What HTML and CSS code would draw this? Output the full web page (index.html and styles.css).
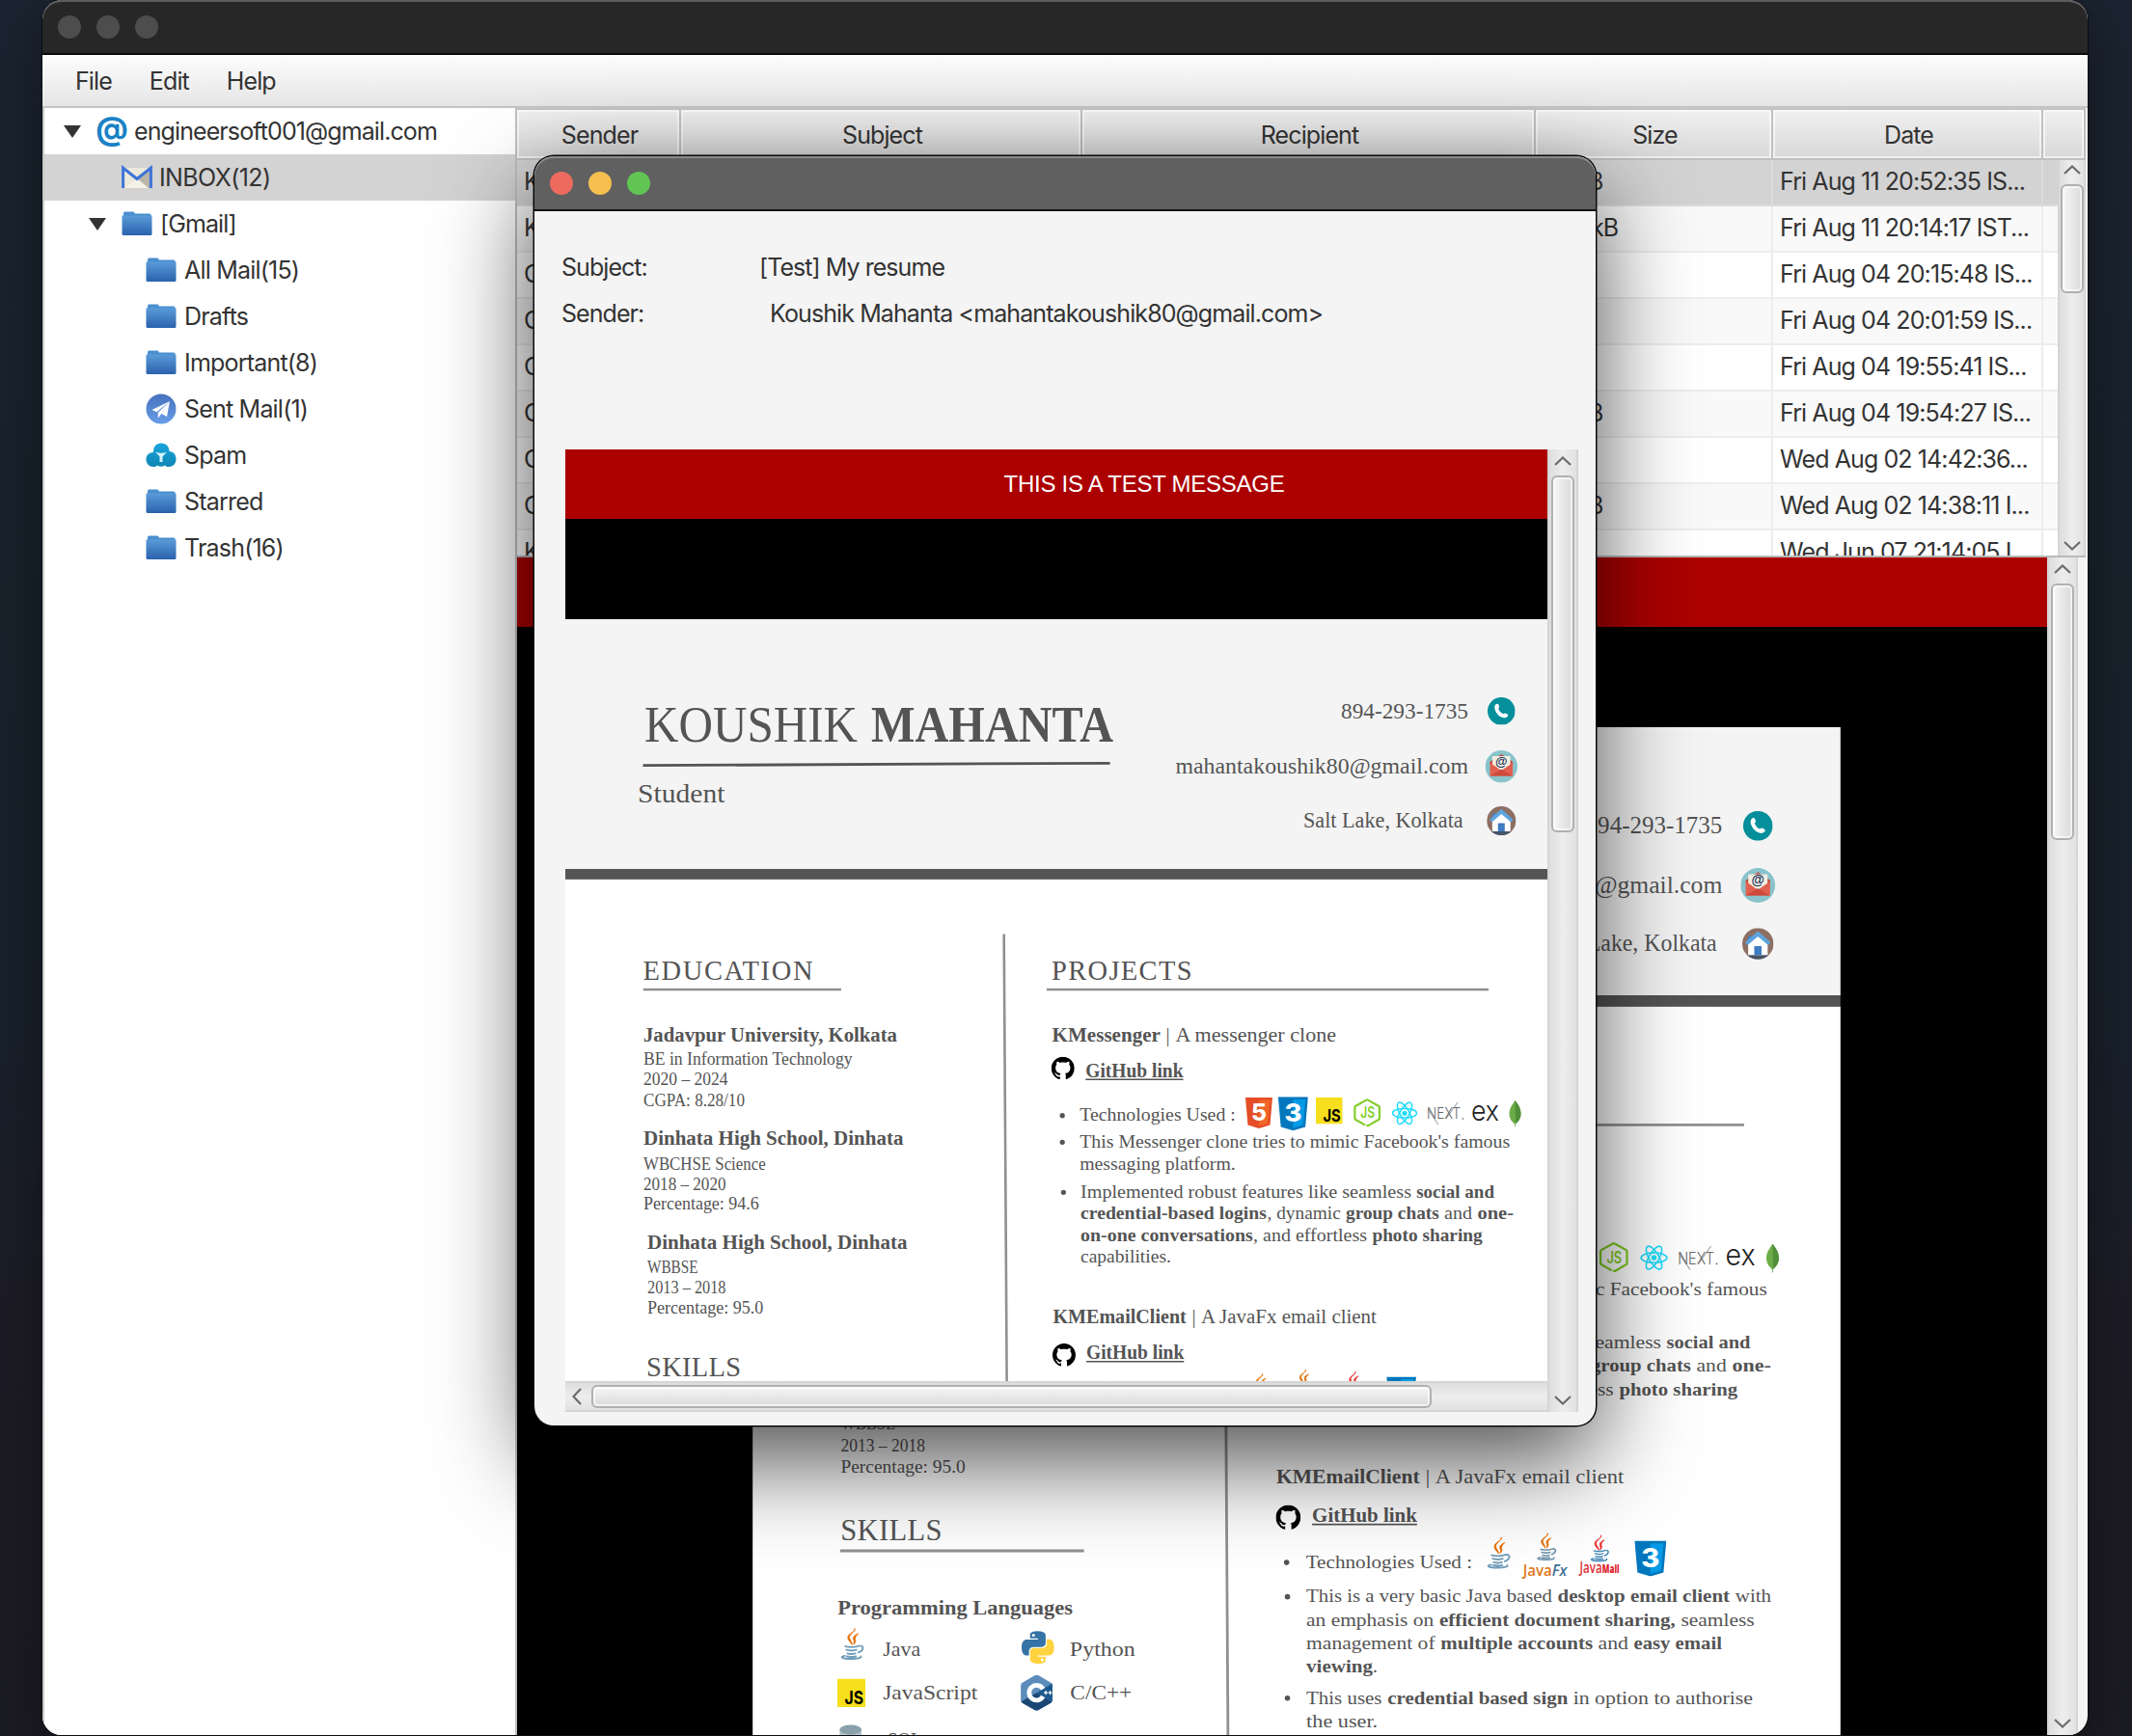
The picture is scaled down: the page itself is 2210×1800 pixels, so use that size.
FILE: index.html
```html
<!DOCTYPE html>
<html lang="en">
<head>
<meta charset="utf-8">
<title>Email client</title>
<link rel="stylesheet" href="styles.css">
</head>
<body>
<svg class="defs" width="0" height="0" aria-hidden="true">
  <defs>
    <linearGradient id="folderFill" x1="0" y1="0" x2="0" y2="1"><stop offset="0" stop-color="#5a9bd8"/><stop offset="1" stop-color="#2a62ad"/></linearGradient>
    <linearGradient id="sentFill" x1="0" y1="0" x2="0" y2="1"><stop offset="0" stop-color="#4571bd"/><stop offset="1" stop-color="#6a9ee8"/></linearGradient>
    <linearGradient id="spamFill" x1="0" y1="0" x2="0" y2="1"><stop offset="0" stop-color="#18a5dc"/><stop offset="1" stop-color="#0f86b5"/></linearGradient>
    <symbol id="folder" viewBox="0 0 32 32">
      <path d="M2 7V5q0-1.500 1.500-1.500H12q1.500 0 1.800 2H29q1.500 0 1.500 1.500v3H2z" fill="#4a8fd0"/>
      <path d="M.500 7.500h31V26.500q0 1.500-1.500 1.500H2Q.500 28 .500 26.500z" fill="url(#folderFill)"/>
    </symbol>
    <symbol id="github" viewBox="0 0 16 16"><path d="M8 0C3.580 0 0 3.580 0 8c0 3.540 2.290 6.530 5.470 7.590.4.070.550-.170.550-.380 0-.190-.010-.820-.010-1.490-2.010.370-2.530-.490-2.690-.940-.090-.230-.480-.940-.820-1.130-.280-.150-.680-.520-.010-.530.630-.010 1.080.580 1.230.820.720 1.210 1.870.870 2.330.660.070-.520.280-.870.510-1.070-1.780-.200-3.640-.890-3.640-3.950 0-.870.310-1.590.820-2.150-.080-.200-.360-1.020.080-2.120 0 0 .670-.210 2.200.820.640-.180 1.320-.270 2-.270.680 0 1.360.090 2 .270 1.530-1.040 2.200-.820 2.200-.820.440 1.100.160 1.920.080 2.120.510.560.820 1.270.820 2.150 0 3.070-1.870 3.750-3.650 3.950.290.250.540.730.540 1.480 0 1.070-.010 1.930-.010 2.200 0 .210.150.460.550.380A8.013 8.013 0 0016 8c0-4.420-3.580-8-8-8z"/></symbol>
    <symbol id="phone" viewBox="0 0 32 32">
      <circle cx="16" cy="16" r="16" fill="#048f9b"/>
      <path d="M9.500 8.200c1.600-1.500 3-.700 3.700 1.200.600 1.800.500 2.400-.700 3.800.8 2.600 3 5 5.600 6.200 1.500-1.300 2.200-1.300 3.900-.500 2.200 1 2.500 2.200 1 3.600-3 2.900-8.300.800-11.300-2.700C8.500 16 6.800 11 9.500 8.200z" fill="#fff"/>
    </symbol>
    <symbol id="mail" viewBox="0 0 34 34">
      <circle cx="17" cy="17" r="17" fill="#89c3cb"/>
      <path d="M5 12L17 4l12 8v3H5z" fill="#c34a3d"/>
      <path d="M7.500 6h19v14h-19z" fill="#f3eee0"/>
      <path d="M5 13l12 8.500L29 13v14H5z" fill="#e2604f"/>
      <path d="M5 27l12-7 12 7z" fill="#cf4a3b"/>
      <text x="17" y="16.500" class="at-small">@</text>
    </symbol>
    <symbol id="home" viewBox="0 0 32 32">
      <circle cx="16" cy="16" r="16" fill="#8d6e63"/>
      <path d="M5 27.500h22A16 16 0 0 1 5 27.500z" fill="#455469"/>
      <path d="M6 8h4v8H6z" fill="#4a7fc1"/>
      <path d="M16 6L26 15.500V27.500H6V15.500z" fill="#fff"/>
      <path d="M16 3L29 14.500l-2.500 3L16 8.500 5.500 17.500 3 14.500z" fill="#5da4e0"/>
      <path d="M12.300 18.500h7.400v9h-7.400z" fill="#3e7cc4"/>
    </symbol>
    <symbol id="html5" viewBox="0 0 28 32">
      <path d="M0 0h28l-2.500 28.600L14 32 2.500 28.600z" fill="#e44d26"/>
      <path d="M14 2.500h11.500l-2.200 24.500L14 29.600z" fill="#f16529"/>
      <text x="6" y="23.500" textLength="16" lengthAdjust="spacingAndGlyphs" class="shield-digit">5</text>
    </symbol>
    <symbol id="css3" viewBox="0 0 31 35">
      <path d="M0 0h31l-2.800 31.200L15.500 35 2.800 31.200z" fill="#0277bd"/>
      <path d="M15.500 2.700h12.700l-2.400 26.600-10.300 3z" fill="#039be5"/>
      <text x="6.500" y="26" textLength="18" lengthAdjust="spacingAndGlyphs" class="shield-digit shield-digit-lg">3</text>
    </symbol>
    <symbol id="jslogo" viewBox="0 0 28 28"><path d="M0 0h28v28H0z" fill="#f7df1e"/><text x="7.500" y="25.500" textLength="18.500" lengthAdjust="spacingAndGlyphs" class="js-text">JS</text></symbol>
    <symbol id="node" viewBox="0 0 29 31">
      <path d="M12.500 28.300L2.500 22.600Q1.500 22 1.500 21V9.700q0-1 1-1.600L13.500 1.900q1-.6 2 0l11 6.200q1 .6 1 1.600V21q0 1-1 1.600l-10 5.800q-1.500 1-2.500-.4" fill="none" stroke="#83cd29" stroke-width="2.200"/>
      <text x="7.500" y="21" textLength="15" lengthAdjust="spacingAndGlyphs" class="node-text">JS</text>
    </symbol>
    <symbol id="react" viewBox="0 0 28 26">
      <g fill="none" stroke="#22dcfb" stroke-width="1.600"><ellipse cx="14" cy="13" rx="13" ry="5"/><ellipse cx="14" cy="13" rx="13" ry="5" transform="rotate(60 14 13)"/><ellipse cx="14" cy="13" rx="13" ry="5" transform="rotate(120 14 13)"/></g>
      <circle cx="14" cy="13" r="2.700" fill="#22dcfb"/>
    </symbol>
    <symbol id="mongo" viewBox="0 0 13 28">
      <path d="M6.500 0C9 4 12.500 7.500 12.500 14c0 5-2.500 8-5.500 10.500L6.800 28h-.6L6 24.500C3 22 .500 19 .500 14 .500 7.500 4.500 4 6.500 0z" fill="#6cac48"/>
      <path d="M6.500 0C9 4 12.500 7.500 12.500 14c0 5-2.500 8-5.500 10.500z" fill="#4f8f3a"/>
    </symbol>
    <symbol id="steam" viewBox="0 0 12 17"><path d="M7.500 .500C9 3.500 1 6 2.500 10c.6 2 2.500 3.500 2.500 6.200C3.500 13.500.600 12 .900 9 1.300 5 8 4.500 7.500 .500zM11 5.500C7.500 7 6 8.800 6.200 10.500c.1 1.500 1.500 2 .2 5.500 3-3 1.500-4.300 1.400-5.500 0-1.500 1.100-3 3.200-5z" fill="currentColor" stroke="currentColor" stroke-width=".800"/></symbol>
    <symbol id="cup" viewBox="0 0 23 16">
      <g fill="none" stroke-width="1.800" stroke-linecap="round"><path d="M4.500 1.500q6 1.500 12 0M5.500 5q5 1.500 10 0M6.500 8.500q4 1.300 8 0M18 1c6-1 4.500 5-.5 6.500M4 11c-6 1-2.500 3 6 3 6 0 11-.8 10-2.500M6 11.500q4 1 9 0"/></g>
    </symbol>
    <symbol id="python" viewBox="0 0 32 32">
      <path d="M15.800.300C8 .300 8.500 3.700 8.500 3.700v3.500H16v1.100H5.400S.300 7.700.300 15.900s4.500 7.900 4.500 7.900h2.600V20s-.1-4.500 4.400-4.500h7.500s4.200.1 4.200-4.100V4.500S24.200.300 15.800.300z" fill="#3572a5"/>
      <circle cx="11.700" cy="4.100" r="1.400" fill="#fff"/>
      <path d="M16.200 31.700c7.800 0 7.300-3.400 7.300-3.400v-3.500H16v-1.100h10.600s5.100.6 5.100-7.600-4.500-7.900-4.500-7.900h-2.600V12s.1 4.500-4.400 4.500h-7.500s-4.200-.1-4.200 4.100v6.900s-.7 4.200 7.700 4.200z" fill="#ffd340"/>
      <circle cx="20.300" cy="27.900" r="1.400" fill="#fff"/>
    </symbol>
    <symbol id="cpp" viewBox="0 0 31 35">
      <path d="M15.500 0q1 0 2 .6l12 7q1.500.9 1.500 2.400v15q0 1.500-1.500 2.400l-12 7q-2 1.200-4 0l-12-7Q0 26.500 0 25V10Q0 8.500 1.500 7.600l12-7q1-.6 2-.6z" fill="#5c8dbc"/>
      <path d="M15.500 17.500L30.300 26q-.3 1-1 1.400l-12 7q-1.800 1.200-3.800 0l-12-7Q1 27 .600 26z" fill="#1a4674"/>
      <path d="M15.500 17.500L30.500 8.500q.5.500.5 1.500v15q0 .700-.4 1.200z" fill="#1b598e"/>
      <path d="M21.800 13.800A7.300 7.300 0 1 0 21.800 21.200" fill="none" stroke="#fff" stroke-width="4.500"/>
      <path d="M22.500 17.500h4M24.500 15.500v4M27 17.500h3.500M28.700 15.500v4" stroke="#fff" stroke-width="1.200"/>
    </symbol>
  </defs>
</svg>

<main class="desktop">
  <section class="window main-window">
    <header class="titlebar"><i class="dot"></i><i class="dot"></i><i class="dot"></i></header>
    <nav class="menubar"><span>File</span><span>Edit</span><span>Help</span></nav>
    <div class="workspace">
      <ul class="tree">
        <li class="lvl0"><i class="twisty"></i><svg class="ico ico-at" viewBox="0 0 32 40"><text x="16" y="29" class="at-big">@</text></svg><span>engineersoft001@gmail.com</span></li>
        <li class="lvl1 leaf selected"><svg class="ico" viewBox="0 0 32 32"><path d="M1.500 6h29v21h-29z" fill="#ece9dc"/><path d="M16 17L30 7v20h-5z" fill="#b9b6a8"/><path d="M4 27l12-10 12 10z" fill="#f4f2e8"/><path d="M1.600 27V6L16 17.500 30.400 6v21" fill="none" stroke="#3f74d8" stroke-width="3"/></svg><span>INBOX(12)</span></li>
        <li class="lvl1"><i class="twisty"></i><svg class="ico"><use href="#folder"/></svg><span>[Gmail]</span></li>
        <li class="lvl2"><svg class="ico"><use href="#folder"/></svg><span>All Mail(15)</span></li>
        <li class="lvl2"><svg class="ico"><use href="#folder"/></svg><span>Drafts</span></li>
        <li class="lvl2"><svg class="ico"><use href="#folder"/></svg><span>Important(8)</span></li>
        <li class="lvl2"><svg class="ico" viewBox="0 0 32 32"><circle cx="16" cy="16" r="15.500" fill="url(#sentFill)"/><path d="M25 8L6.500 17l5 2.200zM25 8L12.800 20v5.500l3-3.800zM25 8l-8.500 13 5.500 3z" fill="#fff"/></svg><span>Sent Mail(1)</span></li>
        <li class="lvl2"><svg class="ico" viewBox="0 0 32 32"><path d="M8 13C8 7 11 3.500 16 3.500S24.500 7 24.500 12c4.500.3 7 3.500 7 8 0 5-3.500 8-7.500 8-2 0-3-.5-4-1.500q-4 2.500-8 0C11 27.500 10 28 8 28c-4.500 0-7.500-3.500-7.500-8 0-4 3-7 7.500-7z" fill="url(#spamFill)"/><path d="M10 12.500q6 2.500 12 0L17.500 17.500V23h-3v-5.500z" fill="#d5f1fa"/></svg><span>Spam</span></li>
        <li class="lvl2"><svg class="ico"><use href="#folder"/></svg><span>Starred</span></li>
        <li class="lvl2"><svg class="ico"><use href="#folder"/></svg><span>Trash(16)</span></li>
      </ul>
      <div class="content">
        <div class="table">
          <div class="row head"><span>Sender</span><span>Subject</span><span>Recipient</span><span>Size</span><span>Date</span><span></span></div>
          <div class="table-body">
            <div class="rows">
              <div class="row selected"><span>K</span><span></span><span></span><span class="size-a">B</span><span>Fri Aug 11 20:52:35 IS...</span><span></span></div>
              <div class="row alt"><span>K</span><span></span><span></span><span class="size-b">kB</span><span>Fri Aug 11 20:14:17 IST...</span><span></span></div>
              <div class="row"><span>G</span><span></span><span></span><span></span><span>Fri Aug 04 20:15:48 IS...</span><span></span></div>
              <div class="row alt"><span>G</span><span></span><span></span><span></span><span>Fri Aug 04 20:01:59 IS...</span><span></span></div>
              <div class="row"><span>G</span><span></span><span></span><span></span><span>Fri Aug 04 19:55:41 IS...</span><span></span></div>
              <div class="row alt"><span>G</span><span></span><span></span><span class="size-a">B</span><span>Fri Aug 04 19:54:27 IS...</span><span></span></div>
              <div class="row"><span>G</span><span></span><span></span><span></span><span>Wed Aug 02 14:42:36...</span><span></span></div>
              <div class="row alt"><span>G</span><span></span><span></span><span class="size-a">B</span><span>Wed Aug 02 14:38:11 I...</span><span></span></div>
              <div class="row"><span>K</span><span></span><span></span><span></span><span>Wed Jun 07 21:14:05 I...</span><span></span></div>
            </div>
            <div class="vbar table-bar"><svg class="arrow" viewBox="0 0 18 10"><path d="M1 9l8-7.500L17 9"/></svg><i class="thumb"></i><svg class="arrow" viewBox="0 0 18 10"><path d="M1 1l8 7.500L17 1"/></svg></div>
          </div>
        </div>
        <div class="preview">
          <div class="message">
            <div class="banner"></div>
            <svg class="resume resume-back" viewBox="0 0 1050 974" fill="#545454">
              <path d="M0 0h1050v259H0z" fill="#f4f4f4"/><path d="M0 259h1050v10.700H0z"/><path d="M0 269.700h1050V974H0z" fill="#fff"/>
              <g class="t22">
                <text x="804" y="102.500" textLength="132" lengthAdjust="spacingAndGlyphs">894-293-1735</text>
                <text x="632.400" y="160" textLength="303.600" lengthAdjust="spacingAndGlyphs">mahantakoushik80@gmail.com</text>
                <text x="765" y="215.700" textLength="165.700" lengthAdjust="spacingAndGlyphs">Salt Lake, Kolkata</text>
              </g>
              <use href="#phone" x="956" y="81" width="28.600" height="28.600"/><use href="#mail" x="953.600" y="136" width="33.400" height="33.400"/><use href="#home" x="955.200" y="194" width="30.200" height="30.200"/>
              <path d="M499 384H957M84.400 795.200H319.800M454.700 326.600L458.800 974" class="rule"/>
              <use href="#node" x="816.900" y="496.500" width="28.500" height="31"/><use href="#react" x="856.500" y="499.500" width="27" height="25.500"/>
              <text x="893" y="518.300" textLength="35" lengthAdjust="spacingAndGlyphs" class="next">NEXT</text><path d="M894 508l11 16M913 518l12-17" stroke="#777" stroke-width=".8"/><circle cx="930.500" cy="518" r=".8"/>
              <text x="939" y="520" textLength="29" lengthAdjust="spacingAndGlyphs" class="express">ex</text>
              <use href="#mongo" x="978" y="498.700" width="13" height="28"/>
              <g class="t17">
                <text x="533.200" y="548" textLength="446" lengthAdjust="spacingAndGlyphs">This Messenger clone tries to mimic Facebook's famous</text>
                <text x="534" y="599.700" textLength="343" lengthAdjust="spacingAndGlyphs">Implemented robust features like seamless</text><text x="882.200" y="599.700" textLength="80.800" lengthAdjust="spacingAndGlyphs" class="b">social and</text>
                <text x="809" y="622.300" textLength="96.800" lengthAdjust="spacingAndGlyphs" class="b">group chats</text><text x="911" y="622.300" textLength="29" lengthAdjust="spacingAndGlyphs">and</text><text x="945.400" y="622.300" textLength="37.600" lengthAdjust="spacingAndGlyphs" class="b">one-</text>
                <text x="713.600" y="645" textLength="117.400" lengthAdjust="spacingAndGlyphs">, and effortless</text><text x="836.400" y="645" textLength="114.300" lengthAdjust="spacingAndGlyphs" class="b">photo sharing</text>
                <text x="85" y="678" textLength="52.600" lengthAdjust="spacingAndGlyphs">WBBSE</text>
                <text x="85" y="699" textLength="81.500" lengthAdjust="spacingAndGlyphs">2013 – 2018</text>
                <text x="85" y="720" textLength="120.400" lengthAdjust="spacingAndGlyphs">Percentage: 95.0</text>
                <text x="534" y="811.700" textLength="160.600" lengthAdjust="spacingAndGlyphs">Technologies Used :</text>
                <text x="534.400" y="845" textLength="237.300" lengthAdjust="spacingAndGlyphs">This is a very basic Java based</text><text x="777" y="845" textLength="166.200" lengthAdjust="spacingAndGlyphs" class="b">desktop email client</text><text x="948.500" y="845" textLength="34.700" lengthAdjust="spacingAndGlyphs">with</text>
                <text x="534.400" y="867.500" textLength="123.100" lengthAdjust="spacingAndGlyphs">an emphasis on</text><text x="662.700" y="867.500" textLength="228" lengthAdjust="spacingAndGlyphs" class="b">efficient document sharing,</text><text x="896" y="867.500" textLength="71" lengthAdjust="spacingAndGlyphs">seamless</text>
                <text x="534.400" y="890" textLength="124.300" lengthAdjust="spacingAndGlyphs">management of</text><text x="664" y="890" textLength="147" lengthAdjust="spacingAndGlyphs" class="b">multiple accounts</text><text x="816" y="890" textLength="29.200" lengthAdjust="spacingAndGlyphs">and</text><text x="850.400" y="890" textLength="85.200" lengthAdjust="spacingAndGlyphs" class="b">easy email</text>
                <text x="534.400" y="912.700" textLength="64.200" lengthAdjust="spacingAndGlyphs" class="b">viewing</text><text x="598.600" y="912.700">.</text>
                <text x="534.400" y="943" textLength="73" lengthAdjust="spacingAndGlyphs">This uses</text><text x="612.700" y="943" textLength="174.300" lengthAdjust="spacingAndGlyphs" class="b">credential based sign</text><text x="791.900" y="943" textLength="173.500" lengthAdjust="spacingAndGlyphs">in option to authorise</text>
                <text x="534.400" y="965.600" textLength="69" lengthAdjust="spacingAndGlyphs">the user.</text>
              </g>
              <circle cx="515.400" cy="806.500" r="2.600"/><circle cx="516.200" cy="839.600" r="2.600"/><circle cx="516.200" cy="937.400" r="2.600"/>
              <g class="t19">
                <text x="505.400" y="730" textLength="138.400" lengthAdjust="spacingAndGlyphs" class="b">KMEmailClient</text><text x="649.500" y="730">|</text><text x="658.900" y="730" textLength="182" lengthAdjust="spacingAndGlyphs">A JavaFx email client</text>
                <text x="540" y="767" textLength="101.300" lengthAdjust="spacingAndGlyphs" class="b">GitHub link</text>
                <text x="82" y="856.300" textLength="227" lengthAdjust="spacingAndGlyphs" class="b">Programming Languages</text>
                <text x="125.700" y="896.300" textLength="36.300" lengthAdjust="spacingAndGlyphs">Java</text><text x="306" y="896.300" textLength="63.300" lengthAdjust="spacingAndGlyphs">Python</text>
                <text x="125.700" y="938.500" textLength="91.300" lengthAdjust="spacingAndGlyphs">JavaScript</text><text x="306.500" y="938.500" textLength="59.500" lengthAdjust="spacingAndGlyphs">C/C++</text>
                <text x="130.300" y="984" textLength="33" lengthAdjust="spacingAndGlyphs">SQL</text>
              </g>
              <path d="M540 769.700h101.300" stroke="#545454" stroke-width="1.500"/>
              <use href="#github" x="505" y="751" width="24" height="24" fill="#000"/>
              <text x="84.800" y="784.600" textLength="98" lengthAdjust="spacing" class="section">SKILLS</text>
              <use href="#steam" x="715" y="781.500" width="12" height="17.500" color="#e76f00"/><use href="#cup" x="708.700" y="798" width="23" height="15.500" stroke="#6f9cba"/>
              <use href="#steam" x="760.500" y="777.500" width="11" height="16" color="#e76f00"/><use href="#cup" x="756.500" y="792.500" width="20" height="13" stroke="#6f94ad"/>
              <text x="743.500" y="819" textLength="28" lengthAdjust="spacingAndGlyphs" class="brand" fill="#e07a1c">Java</text><text x="771.500" y="819" textLength="14.500" lengthAdjust="spacingAndGlyphs" class="brand it" fill="#3f7196">Fx</text>
              <use href="#steam" x="812" y="779.500" width="11" height="16" color="#ea2d2e"/><use href="#cup" x="808" y="794" width="19.500" height="12.500" stroke="#4a8cba"/>
              <text x="798.400" y="816.500" textLength="21.500" lengthAdjust="spacingAndGlyphs" class="brand" fill="#e0303a">Java</text><text x="820" y="816.500" textLength="16.500" lengthAdjust="spacingAndGlyphs" class="brand sm" fill="#e0202a">Mail</text>
              <use href="#css3" x="851.200" y="785.400" width="30.800" height="34.600"/>
              <use href="#steam" x="91" y="869.400" width="12" height="17.500" color="#e76f00"/><use href="#cup" x="84.800" y="886" width="23" height="15.500" stroke="#6f9cba"/>
              <use href="#python" x="259.300" y="872.500" width="32" height="32"/><use href="#jslogo" x="81.500" y="918.500" width="27.500" height="27.500"/><use href="#cpp" x="258.600" y="915" width="31" height="34.500"/>
              <path d="M84 968v8h21v-8z" fill="#b5c6d0"/><ellipse cx="94.500" cy="968" rx="10.600" ry="4.600" fill="#8aa0ab"/>
            </svg>
          </div>
          <div class="vbar preview-bar"><svg class="arrow" viewBox="0 0 18 10"><path d="M1 9l8-7.500L17 9"/></svg><i class="thumb"></i><svg class="arrow" viewBox="0 0 18 10"><path d="M1 1l8 7.500L17 1"/></svg></div>
        </div>
      </div>
    </div>
  </section>

  <section class="window popup">
    <header class="titlebar"><i class="dot red"></i><i class="dot yellow"></i><i class="dot green"></i></header>
    <dl class="fields">
      <dt>Subject:</dt><dd>[Test] My resume</dd>
      <dt>Sender:</dt><dd class="from">Koushik Mahanta &lt;mahantakoushik80@gmail.com&gt;</dd>
    </dl>
    <div class="viewer">
      <div class="page">
        <div class="message">
          <div class="banner"><span>THIS IS A TEST MESSAGE</span></div>
          <svg class="resume resume-front" viewBox="0 0 1050 974" fill="#545454">
            <path d="M0 0h1050v259H0z" fill="#f4f4f4"/><path d="M0 259h1050v10.700H0z"/><path d="M0 269.700h1050V974H0z" fill="#fff"/>
            <text x="82" y="127" textLength="221" lengthAdjust="spacingAndGlyphs" class="name">KOUSHIK</text><text x="317" y="127" textLength="251" lengthAdjust="spacingAndGlyphs" class="name b">MAHANTA</text>
            <path d="M80.500 151.700L564.600 149.300" stroke="#545454" stroke-width="2.800"/>
            <text x="75" y="190" textLength="90.500" lengthAdjust="spacingAndGlyphs" class="role">Student</text>
            <g class="t22">
              <text x="804" y="102.500" textLength="132" lengthAdjust="spacingAndGlyphs">894-293-1735</text>
              <text x="632.400" y="160" textLength="303.600" lengthAdjust="spacingAndGlyphs">mahantakoushik80@gmail.com</text>
              <text x="765" y="215.700" textLength="165.700" lengthAdjust="spacingAndGlyphs">Salt Lake, Kolkata</text>
            </g>
            <use href="#phone" x="956" y="81" width="28.600" height="28.600"/><use href="#mail" x="953.600" y="136" width="33.400" height="33.400"/><use href="#home" x="955.200" y="194" width="30.200" height="30.200"/>
            <text x="80.500" y="374" textLength="176" lengthAdjust="spacing" class="section">EDUCATION</text><text x="504" y="374" textLength="145.500" lengthAdjust="spacing" class="section">PROJECTS</text><text x="84" y="784.800" textLength="98" lengthAdjust="spacing" class="section">SKILLS</text>
            <path d="M80.700 384H286M499 384H957M454.700 326.600L458.800 974" class="rule"/>
            <g class="t19">
              <text x="81" y="437.600" textLength="263" lengthAdjust="spacingAndGlyphs" class="b">Jadavpur University, Kolkata</text>
              <text x="81" y="545" textLength="269.400" lengthAdjust="spacingAndGlyphs" class="b">Dinhata High School, Dinhata</text>
              <text x="85" y="653" textLength="269.400" lengthAdjust="spacingAndGlyphs" class="b">Dinhata High School, Dinhata</text>
              <text x="504.600" y="437.700" textLength="112.300" lengthAdjust="spacingAndGlyphs" class="b">KMessenger</text><text x="622.500" y="437.700">|</text><text x="632.400" y="437.700" textLength="166.600" lengthAdjust="spacingAndGlyphs">A messenger clone</text>
              <text x="539.300" y="474.700" textLength="101.200" lengthAdjust="spacingAndGlyphs" class="b">GitHub link</text>
              <text x="505.400" y="730" textLength="138.400" lengthAdjust="spacingAndGlyphs" class="b">KMEmailClient</text><text x="649.500" y="730">|</text><text x="658.900" y="730" textLength="182" lengthAdjust="spacingAndGlyphs">A JavaFx email client</text>
              <text x="540" y="767" textLength="101.300" lengthAdjust="spacingAndGlyphs" class="b">GitHub link</text>
            </g>
            <path d="M539.300 477.300h101.200M540 769.700h101.300" stroke="#545454" stroke-width="1.500"/>
            <use href="#github" x="503.800" y="453.700" width="24" height="24" fill="#000"/><use href="#github" x="505" y="751" width="24" height="24" fill="#000"/>
            <g class="t17">
              <text x="81" y="462.300" textLength="216.600" lengthAdjust="spacingAndGlyphs">BE in Information Technology</text>
              <text x="81" y="483" textLength="87.600" lengthAdjust="spacingAndGlyphs">2020 – 2024</text>
              <text x="81" y="504.800" textLength="105" lengthAdjust="spacingAndGlyphs">CGPA: 8.28/10</text>
              <text x="81" y="570.900" textLength="126.600" lengthAdjust="spacingAndGlyphs">WBCHSE Science</text>
              <text x="81" y="591.600" textLength="85.500" lengthAdjust="spacingAndGlyphs">2018 – 2020</text>
              <text x="81" y="612.300" textLength="119.800" lengthAdjust="spacingAndGlyphs">Percentage: 94.6</text>
              <text x="85" y="678" textLength="52.600" lengthAdjust="spacingAndGlyphs">WBBSE</text>
              <text x="85" y="699" textLength="81.500" lengthAdjust="spacingAndGlyphs">2013 – 2018</text>
              <text x="85" y="720" textLength="120.400" lengthAdjust="spacingAndGlyphs">Percentage: 95.0</text>
              <text x="533.200" y="520.300" textLength="161.600" lengthAdjust="spacingAndGlyphs">Technologies Used :</text>
              <text x="533.200" y="548" textLength="446" lengthAdjust="spacingAndGlyphs">This Messenger clone tries to mimic Facebook's famous</text>
              <text x="533.200" y="570.700" textLength="161.600" lengthAdjust="spacingAndGlyphs">messaging platform.</text>
              <text x="534" y="599.700" textLength="343" lengthAdjust="spacingAndGlyphs">Implemented robust features like seamless</text><text x="882.200" y="599.700" textLength="80.800" lengthAdjust="spacingAndGlyphs" class="b">social and</text>
              <text x="534" y="622.300" textLength="193" lengthAdjust="spacingAndGlyphs" class="b">credential-based logins</text><text x="727.500" y="622.300" textLength="76.300" lengthAdjust="spacingAndGlyphs">, dynamic</text><text x="809" y="622.300" textLength="96.800" lengthAdjust="spacingAndGlyphs" class="b">group chats</text><text x="911" y="622.300" textLength="29" lengthAdjust="spacingAndGlyphs">and</text><text x="945.400" y="622.300" textLength="37.600" lengthAdjust="spacingAndGlyphs" class="b">one-</text>
              <text x="534" y="645" textLength="178.800" lengthAdjust="spacingAndGlyphs" class="b">on-one conversations</text><text x="713" y="645" textLength="118" lengthAdjust="spacingAndGlyphs">, and effortless</text><text x="836.400" y="645" textLength="114.300" lengthAdjust="spacingAndGlyphs" class="b">photo sharing</text>
              <text x="534" y="667.300" textLength="93.900" lengthAdjust="spacingAndGlyphs">capabilities.</text>
            </g>
            <circle cx="515.200" cy="514.700" r="2.600"/><circle cx="515.200" cy="542.300" r="2.600"/><circle cx="516.400" cy="594.300" r="2.600"/>
            <use href="#html5" x="705" y="496" width="28" height="32"/><use href="#css3" x="738.900" y="495.300" width="31" height="35"/><use href="#jslogo" x="778" y="495.700" width="27.700" height="27.700"/>
            <use href="#node" x="816.900" y="496.500" width="28.500" height="31"/><use href="#react" x="856.500" y="499.500" width="27" height="25.500"/>
            <text x="893" y="518.300" textLength="35" lengthAdjust="spacingAndGlyphs" class="next">NEXT</text><path d="M894 508l11 16M913 518l12-17" stroke="#777" stroke-width=".8"/><circle cx="930.500" cy="518" r=".8"/>
            <text x="939" y="520" textLength="29" lengthAdjust="spacingAndGlyphs" class="express">ex</text>
            <use href="#mongo" x="978" y="498.700" width="13" height="28"/>
            <use href="#steam" x="715" y="781.500" width="12" height="17.500" color="#e76f00"/><use href="#steam" x="760.500" y="777.500" width="11" height="16" color="#e76f00"/><use href="#steam" x="812" y="779.500" width="11" height="16" color="#ea2d2e"/><use href="#css3" x="851.200" y="785.400" width="30.800" height="34.600"/>
          </svg>
        </div>
        <div class="hbar"><svg class="arrow" viewBox="0 0 10 18"><path d="M9 1L1.500 9 9 17"/></svg><i class="thumb"></i></div>
      </div>
      <div class="vbar popup-bar"><svg class="arrow" viewBox="0 0 18 10"><path d="M1 9l8-7.500L17 9"/></svg><i class="thumb"></i><svg class="arrow" viewBox="0 0 18 10"><path d="M1 1l8 7.500L17 1"/></svg></div>
    </div>
  </section>
</main>
</body>
</html>
```
FILE: styles.css
```css
* { box-sizing: border-box; }
body { margin: 0; font-family: Inter, "Liberation Sans", sans-serif; font-size: 25px; letter-spacing: -0.9px; color: #333; }
.defs { position: absolute; }
ul, dl, dd { margin: 0; padding: 0; list-style: none; }

.desktop { position: relative; width: 2210px; height: 1800px; padding-left: 44px; overflow: hidden; background: linear-gradient(#1b2330, #17222b 35%, #18202b 60%, #1d1c26 75%, #1b1b22); }
.window { display: flex; flex-direction: column; overflow: hidden; }
.main-window { width: 2120px; height: 1799px; border-radius: 20px; background: #f4f4f4; box-shadow: 0 0 0 1px #0b0d10, 0 20px 50px rgba(0,0,0,.4); }

.titlebar { display: flex; align-items: center; gap: 16px; flex: none; }
.main-window .titlebar { height: 57px; padding: 0 16px; background: #272727; border-bottom: 2px solid #0a0a0a; box-shadow: inset 0 2px 0 #5c5c5c; border-radius: 20px 20px 0 0; }
.dot { width: 24px; height: 24px; border-radius: 50%; background: #4d4d4d; }
.red { background: #ed6a5e; }
.yellow { background: #f5bf4f; }
.green { background: #61c554; }

.menubar { display: flex; align-items: center; gap: 39px; flex: none; height: 55px; padding: 0 34px; background: linear-gradient(#fdfdfd, #e5e5e5); border-bottom: 2px solid #c4c4c4; }
.workspace { display: flex; flex: 1; min-height: 0; }

.tree { width: 492px; background: #fff; border-left: 2px solid #c8c8c8; border-right: 2px solid #c0c0c0; }
.tree li { display: flex; align-items: center; height: 48px; white-space: nowrap; }
.tree .selected { background: #d3d3d3; }
.lvl0 { padding-left: 20px; }
.lvl1 { padding-left: 46px; }
.lvl1.leaf { padding-left: 80px; }
.lvl2 { padding-left: 105px; letter-spacing: -0.8px; }
.ico { width: 32px; height: 32px; margin-right: 8px; flex: none; }
.ico-at { height: 40px; margin-right: 7px; }
.leaf .ico { margin-right: 7px; }
.leaf span { letter-spacing: -0.6px; }
.twisty { margin-right: 16px; border: 9px solid transparent; border-top: 13px solid #333; border-bottom: 0; }
.at-big { font: bold 33px Inter, sans-serif; fill: #1a82c6; text-anchor: middle; letter-spacing: 0; }

.content { display: flex; flex-direction: column; flex: 1; min-width: 0; }
.table { display: flex; flex-direction: column; height: 466px; margin-right: 2px; border-top: 2px solid #c4c4c4; border-bottom: 2px solid #b9b9b9; }
.row { display: grid; grid-template-columns: 170px 416px 470px 246px 280px 44px; height: 48px; background: #fff; }
.row > span { display: flex; align-items: center; padding: 0 0 2px 7px; border-right: 2px solid #ededed; border-bottom: 2px solid #ededed; white-space: nowrap; }
.row.alt { background: #f9f9f9; }
.row.selected { background: #d3d3d3; }
.row.selected > span { border-color: #dcdcdc; }
.row.head { height: 52px; flex: none; }
.row.head > span { justify-content: center; padding: 2px 0 0 3px; background: linear-gradient(#f0f0f0, #d8d8d8); border-right: 2px solid #c0c0c0; border-bottom: 2px solid #c0c0c0; box-shadow: inset 0 0 0 2px rgba(255,255,255,.6); }
.row > .size-a { padding-left: 54px; }
.row > .size-b { padding-left: 57px; }
.table-body { display: flex; flex: 1; min-height: 0; }
.rows { width: 1597px; overflow: hidden; }

.vbar { display: flex; flex-direction: column; align-items: center; justify-content: flex-start; background: linear-gradient(90deg, #dedede, #ededed 50%, #e2e2e2); border: solid #d5d5d5; border-width: 0 2px; }
.hbar { display: flex; align-items: center; flex: none; height: 32px; padding-left: 7px; background: linear-gradient(#dedede, #ededed 50%, #e2e2e2); border: solid #d5d5d5; border-width: 2px 0; }
.arrow { width: 18px; height: 10px; flex: none; fill: none; stroke: #6c6c6c; stroke-width: 2.2; }
.hbar .arrow { width: 10px; height: 18px; }
.thumb { border: 2px solid #b0b0b0; border-radius: 6px; background: linear-gradient(90deg, #f6f6f6, #dadada); box-shadow: inset 0 0 0 2px rgba(255,255,255,.6); flex: none; }
.vbar .thumb { width: 24px; }
.vbar .arrow:last-child { margin-top: auto; }
.hbar .thumb { width: 871px; height: 24px; margin-left: 10px; background: linear-gradient(#f6f6f6, #dadada); }
.table-bar { width: 29px; padding: 5px 0; }
.table-bar .thumb { height: 113px; margin-top: 10px; }
.preview-bar { width: 32px; padding: 7px 0; }
.preview-bar .thumb { height: 266px; margin-top: 10px; }
.popup-bar { width: 32px; padding: 7px 0; }
.popup-bar .thumb { height: 370px; margin-top: 10px; }

.preview { display: flex; flex: 1; min-height: 0; }
.message { overflow: hidden; background: #000; }
.preview .message { width: 1586px; }
.banner { display: flex; align-items: center; justify-content: center; height: 72px; background: #ac0000; color: #fff; font-family: "Liberation Sans", Arial, sans-serif; font-size: 24px; letter-spacing: -0.25px; }
.resume { display: block; margin-top: 104px; letter-spacing: 0; font-family: "Liberation Serif", serif; }
.resume-back { width: 1128px; height: 1046px; margin-left: 244px; }
.resume-front { width: 1050px; height: 974px; }

.popup { position: absolute; left: 554px; top: 162px; width: 1100px; height: 1316px; border-radius: 20px; background: #f4f4f4; box-shadow: 0 0 0 1.5px #0a0a0a, 0 36px 100px rgba(0,0,0,.7); }
.popup .titlebar { height: 57px; padding: 0 16px; background: #606060; border-bottom: 2px solid #111; box-shadow: inset 0 2px 0 #8c8c8c; border-radius: 20px 20px 0 0; }
.fields { display: grid; grid-template-columns: 205px 1fr; grid-auto-rows: 48px; align-items: center; height: 247px; align-content: start; padding: 34px 0 0 28px; letter-spacing: -0.95px; }
.from { padding-left: 11px; letter-spacing: -0.9px; }
.viewer { display: flex; width: 1050px; height: 998px; margin-left: 32px; }
.page { display: flex; flex-direction: column; width: 1018px; }
.popup .message { flex: 1; min-height: 0; }
.popup .banner { width: 1200px; }

.b { font-weight: bold; }
.name { font-size: 52px; }
.role { font-size: 27px; }
.section { font-size: 28.5px; }
.t22 text { font-size: 24px; }
.t19 text { font-size: 20.5px; }
.t17 text { font-size: 18.3px; }
.rule { fill: none; stroke: #909090; stroke-width: 2.6; }
.at-small { font: bold 13px "Liberation Sans", sans-serif; fill: #16335b; text-anchor: middle; }
.shield-digit { font: 800 24px Inter, sans-serif; fill: #fff; }
.shield-digit-lg { font-size: 26px; }
.js-text { font: bold 18px Inter, sans-serif; fill: #000; }
.node-text { font: 600 16px Inter, sans-serif; fill: #83cd29; }
.next { font: 300 15.5px Inter, sans-serif; fill: #666; }
.express { font: 300 29px Inter, sans-serif; fill: #222; }
.brand { font: 600 15.5px "Open Sans", sans-serif; }
.it { font-style: italic; }
.sm { font-size: 11px; font-weight: 800; }
```
